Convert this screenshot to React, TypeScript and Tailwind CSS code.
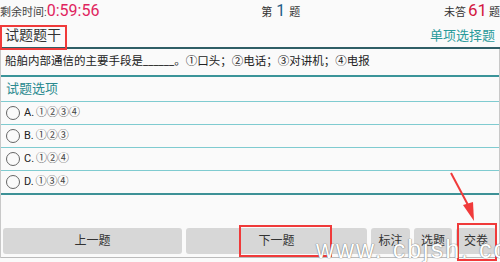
import React from 'react';

const options = [
  { key: 'A.', nums: '①②③④' },
  { key: 'B.', nums: '①②③' },
  { key: 'C.', nums: '①②④' },
  { key: 'D.', nums: '①③④' },
];

const font = "font-['Roboto','Noto_Sans_CJK_SC',sans-serif]";

export default function App() {
  return (
    <div className={`relative w-[500px] h-[262px] overflow-hidden bg-[#fafafa] text-[#333] ${font}`}>
      {/* Top status bar */}
      <div className="flex h-[24px] items-center justify-between">
        <div className="flex items-baseline">
          <span className="text-[11px] text-[#444]">剩余时间:</span>
          <span className="text-[16px] leading-none text-[#e0245e]">0:59:56</span>
        </div>
        <div className="flex items-baseline gap-[4px] pl-[18px]">
          <span className="text-[11px]">第</span>
          <span className="text-[16px] leading-none text-[#1f5d86]">1</span>
          <span className="text-[11px]">题</span>
        </div>
        <div className="flex items-baseline">
          <span className="text-[11px]">未答</span>
          <span className="mx-[2px] text-[17px] leading-none text-[#d3163f]">61</span>
          <span className="text-[11px]">题</span>
        </div>
      </div>

      {/* Question header */}
      <div className="flex h-[25px] items-center justify-between px-[5px] border-b-2 border-[#2f5e66]">
        <span className="text-[14px] text-[#333]">试题题干</span>
        <span className="text-[13px] text-[#2a9a9a]">单项选择题</span>
      </div>

      <div className="border-x border-[#c8c8c8]">
        {/* Question text */}
        <div className="flex h-[28px] items-center px-[4px] border-b-2 border-[#3a9499] text-[11.5px] text-[#222]">
          船舶内部通信的主要手段是______。①口头；②电话；③对讲机；④电报
        </div>

        {/* Options */}
        <div className="flex h-[25px] items-center px-[5px] border-b border-[#7fcbd0] text-[13px] text-[#2a8a8f]">
          试题选项
        </div>
        {options.map((o, i) => (
          <div
            key={o.key}
            className={`flex items-center px-[5px] ${i === 3 ? 'h-[24px] border-b-2 border-[#3d9196]' : 'h-[23px] border-b border-[#7fcbd0]'}`}
          >
            <span className="h-[14px] w-[14px] rounded-full border-[1.5px] border-[#666]" />
            <span className="ml-[4px] text-[11px] text-[#222]">{o.key}</span>
            <span className="ml-[2px] text-[11px] text-[#444]">{o.nums}</span>
          </div>
        ))}

        <div className="h-[32px]" />

        {/* Bottom buttons */}
        <div className="flex h-[31px] gap-[4px] px-[2px] pt-[1px] border-b border-[#bbb]">
          {[
            ['上一题', 'w-[179px]'],
            ['下一题', 'w-[181px]'],
            ['标注', 'w-[39px]'],
            ['选题', 'w-[38px]'],
            ['交卷', 'w-[40px]'],
          ].map(([t, w]) => (
            <div
              key={t}
              className={`${w} flex h-[26px] items-center justify-center rounded-[3px] bg-[#d7d7d7] text-[12px] text-[#333]`}
            >
              {t}
            </div>
          ))}
        </div>
      </div>

      {/* Annotations */}
      <div className="absolute left-0 top-[25px] h-[25px] w-[67px] border-2 border-[#f03a3a]" />
      <div className="absolute left-[239px] top-[225px] h-[32px] w-[93px] border-2 border-[#f03a3a]" />
      <div className="absolute left-[457px] top-[223px] h-[38px] w-[40px] border-2 border-[#f03a3a]" />
      <svg className="absolute left-0 top-0" width="500" height="262" viewBox="0 0 500 262">
        <path d="M451 173 L468 205" stroke="#f03a3a" strokeWidth="2" fill="none" />
        <path d="M463 205 L474 221 L473 202 Z" fill="#f03a3a" />
      </svg>

      {/* Watermark */}
      <div className="absolute left-[316px] top-[237px] whitespace-nowrap font-['Liberation_Sans',sans-serif] text-[25px] leading-none tracking-[2px] text-white [text-shadow:0_0_1px_#777,0_0_1px_#777]">
        www. cbjsh. com
      </div>
    </div>
  );
}
